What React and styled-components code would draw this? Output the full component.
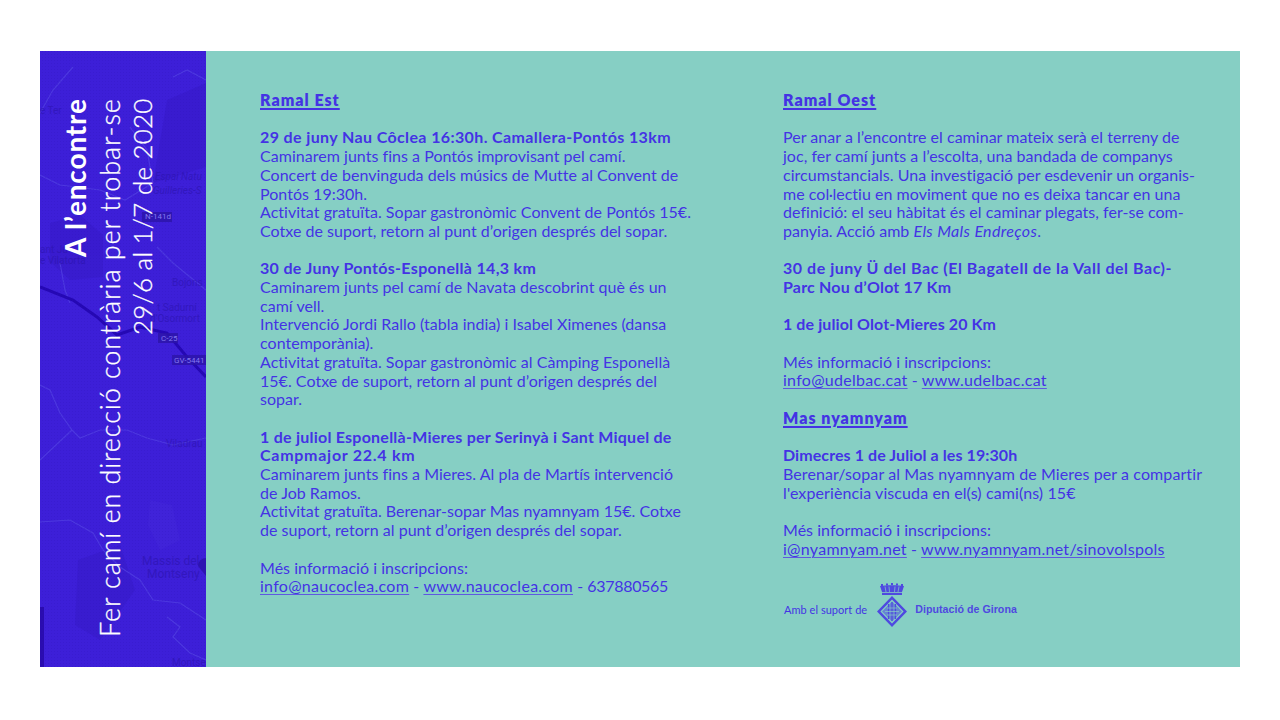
import React from 'react';
import styled, { createGlobalStyle } from 'styled-components';

const Global = createGlobalStyle`
  html, body { margin: 0; padding: 0; background: #fff; }
  body { font-family: "Lato", "Liberation Sans", sans-serif; }
`;

const INK = '#4433e4';

const Page = styled.div`
  width: 1280px;
  height: 720px;
  box-sizing: border-box;
  padding: 51px 40px 53px;
`;

const Panel = styled.main`
  display: flex;
  height: 616px;
  background: #86cfc4;
`;

const Side = styled.aside`
  position: relative;
  flex: 0 0 166px;
  overflow: hidden;
  background: #3d1fd8;
  display: flex;
  justify-content: flex-start;
`;

const MapArt = styled.svg`
  position: absolute;
  inset: 0;
  width: 166px;
  height: 616px;
`;

const Title = styled.h1`
  position: relative;
  margin: 0 0 0 20px;
  padding: 0 0 47px;
  box-sizing: border-box;
  height: 616px;
  writing-mode: vertical-rl;
  transform: rotate(180deg);
  text-align: end;
  color: #fff;
  font-size: 26px;
  line-height: 32px;
  font-weight: 300;
  -webkit-text-stroke: 0.3px #fff;
  white-space: nowrap;
`;

const TitleBold = styled.strong`
  display: block;
  margin-block-end: 4px;
  font-size: 28px;
  line-height: 30px;
  font-weight: 700;
  letter-spacing: 0.85px;
  -webkit-text-stroke: 0;
`;

const TitleLine = styled.span`
  display: block;
  font-size: ${(p) => p.$size}px;
  letter-spacing: ${(p) => p.$spacing}px;
`;

const Content = styled.section`
  flex: 1;
  display: grid;
  grid-template-columns: 523px 1fr;
  padding: 40px 0 0 54px;
  color: ${INK};
  font-size: 16px;
  line-height: 18.7px;
  letter-spacing: 0.03px;
`;

const Column = styled.div`
  display: flex;
  flex-direction: column;
  gap: 18.7px;
`;

const Heading = styled.h2`
  margin: 0;
  font: inherit;
  font-weight: 800;
  letter-spacing: 1px;
  text-decoration: underline;
  text-decoration-thickness: 2px;
  text-underline-offset: 2px;
`;

const Para = styled.p`
  margin: 0;
  white-space: nowrap;
  letter-spacing: ${(p) => p.$track ?? 0.03}px;
`;

const Strong = styled.strong`
  font-weight: 700;
  letter-spacing: ${(p) => p.$track ?? 0.38}px;
`;

const Italic = styled.em`
  letter-spacing: 0.35px;
`;

const Link = styled.a`
  color: inherit;
  letter-spacing: 0.28px;
  text-decoration: underline;
  text-decoration-color: #5f58e0;
  text-decoration-thickness: 1px;
  text-underline-offset: 2px;
`;

const Phone = styled.span`
  letter-spacing: -0.3px;
`;

const Support = styled.div`
  display: flex;
  align-items: center;
  margin-top: 6px;
  font-size: 11px;
  line-height: 14px;
`;

const SupportLabel = styled.span`
  margin: 10px 9px 0 1px;
`;

const Diputacio = styled.span`
  margin: 8px 0 0 7px;
  font-family: "Liberation Sans", sans-serif;
  font-size: 10.65px;
  font-weight: 700;
  color: #4f49e0;
`;

const Lines = ({ items }) =>
  items.map((t, i) => (
    <React.Fragment key={i}>
      {t}
      {i < items.length - 1 && <br />}
    </React.Fragment>
  ));

function SideMap() {
  const label = { fontFamily: 'Roboto, sans-serif', fontSize: 10, fill: '#2a12a8', opacity: 0.55 };
  return (
    <MapArt viewBox="40 51 166 616" aria-hidden="true">
      <defs>
        <pattern id="dots" width="3" height="3" patternUnits="userSpaceOnUse">
          <rect width="1" height="1" fill="#2d12b8" opacity="0.25" />
        </pattern>
      </defs>
      <g fill="#3518c6" opacity="0.45">
        <path d="M50 223 L80 215 L103 235 L103 277 L70 280 L50 262 Z" />
        <path d="M167 100 L206 83 L206 167 L153 183 Z" />
        <path d="M78 560 L120 545 L135 590 L100 640 L75 625 Z" />
      </g>
      <path d="M150 500 L172 505 L180 540 L160 550 L148 525 Z" fill="#4a30dd" opacity="0.25" />
      <g fill="none" stroke="#5240e2" strokeWidth="1.2" opacity="0.75">
        <path d="M73 67 L53 90 L40 113" />
        <path d="M130 127 L147 150 L153 183" />
        <path d="M173 77 L187 70 L206 80" />
        <path d="M40 175 L60 185 L100 190 L125 200 L153 183" />
        <path d="M60 263 L65 290 L70 303" />
        <path d="M157 247 L173 263 L206 290" />
        <path d="M40 385 L50 390 L60 413 L72 430 L80 438 L100 430 L127 430 L147 438 L173 445 L206 438" />
        <path d="M72 430 L40 460" />
        <path d="M40 522 L70 520 L93 533 L103 550 L120 567 L140 580 L153 600 L180 603 L206 620" />
        <path d="M167 617 L180 627 L173 637 L190 653 L206 660" />
      </g>
      <path
        d="M40 287 L73 300 L97 317 L117 335 L140 327 L167 333 L187 357 L206 377"
        fill="none"
        stroke="#2508b4"
        strokeWidth="3"
      />
      <rect x="40" y="607" width="4" height="60" fill="#2a0cb0" />
      <path d="M206 558 a8 8 0 0 0 -8 8 l8 10 Z" fill="#2a12a8" opacity="0.8" />
      <g fill="#2c14a8">
        <rect x="142" y="212" width="30" height="10" opacity="0.8" />
        <rect x="158" y="333" width="20" height="10" opacity="0.8" />
        <rect x="172" y="355" width="34" height="10" opacity="0.8" />
      </g>
      <g style={{ ...label, fontSize: 8, fill: '#8478f0', opacity: 1 }}>
        <text x="145" y="219">N-141d</text>
        <text x="161" y="341">C-25</text>
        <text x="174" y="363">GV-5441</text>
      </g>
      <g style={label}>
        <text x="40" y="114">e Ter</text>
        <text x="155" y="180" fontStyle="italic">Espai Natu</text>
        <text x="153" y="194" fontStyle="italic">Guilleries-S</text>
        <text x="40" y="253">ant Ju</text>
        <text x="40" y="264">e Vilatorta</text>
        <text x="172" y="286">Bojons</text>
        <text x="157" y="311">t Sadurní</text>
        <text x="150" y="322">d'Osormort</text>
        <text x="166" y="447">Viladrau</text>
        <text x="142" y="565" style={{ fontSize: 12, opacity: 1 }}>Massis del</text>
        <text x="147" y="578" style={{ fontSize: 12, opacity: 1 }}>Montseny</text>
        <text x="172" y="666">Montse</text>
      </g>
      <rect x="40" y="51" width="166" height="616" fill="url(#dots)" />
    </MapArt>
  );
}

function Crest() {
  const c = '#4f49e0';
  return (
    <svg width="32" height="44" viewBox="0 0 32 44" aria-hidden="true">
      <g fill={c}>
        <path d="M5 1 h2 v2 H5z M10 0.4 h2 v2 h-2z M15 0 h2 v2 h-2z M20 0.4 h2 v2 h-2z M25 1 h2 v2 h-2z" />
        <path d="M4 3 C9 2 23 2 28 3 L26 9 H6 Z" />
        <rect x="6" y="9.8" width="20" height="2.2" />
      </g>
      <g stroke="#86cfc4" strokeWidth="0.7">
        <path d="M9 3.5 L10 9 M13 3.5 L13.5 9 M19 3.5 L18.5 9 M23 3.5 L22 9" />
      </g>
      <path d="M16 13 L31 28.5 L16 44 L1 28.5 Z M16 16.5 L4.4 28.5 L16 40.5 L27.6 28.5 Z" fill={c} fillRule="evenodd" />
      <path d="M16 18.5 L26 28.5 L16 38.5 L6 28.5 Z" fill={c} opacity="0.55" />
      <g stroke={c} strokeWidth="1.2">
        <path d="M12.5 21 V36 M19.5 21 V36 M16 19 V38" />
      </g>
      <g stroke="#86cfc4" strokeWidth="0.7">
        <path d="M11 25 H21 M9 28.5 H23 M11 32 H21" />
      </g>
    </svg>
  );
}

export default function App() {
  return (
    <Page>
      <Global />
      <Panel>
        <Side>
          <SideMap />
          <Title>
            <TitleBold>A l’encontre</TitleBold>
            <TitleLine $size={27} $spacing={0.9}>Fer camí en direcció contrària per trobar-se</TitleLine>
            <TitleLine $size={26} $spacing={0.2}>29/6 al 1/7 de 2020</TitleLine>
          </Title>
        </Side>
        <Content>
          <Column>
            <Heading>Ramal Est</Heading>
            <Para>
              <Strong>29 de juny Nau Côclea 16:30h. Camallera-Pontós 13km</Strong>
              <br />
              <Lines
                items={[
                  'Caminarem junts fins a Pontós improvisant pel camí.',
                  'Concert de benvinguda dels músics de Mutte al Convent de',
                  'Pontós 19:30h.',
                  'Activitat gratuïta. Sopar gastronòmic Convent de Pontós 15€.',
                  'Cotxe de suport, retorn al punt d’origen després del sopar.',
                ]}
              />
            </Para>
            <Para>
              <Strong $track={0.32}>30 de Juny Pontós-Esponellà 14,3 km</Strong>
              <br />
              <Lines
                items={[
                  'Caminarem junts pel camí de Navata descobrint què és un',
                  'camí vell.',
                  'Intervenció Jordi Rallo (tabla india) i Isabel Ximenes (dansa',
                  'contemporània).',
                  'Activitat gratuïta. Sopar gastronòmic al Càmping Esponellà',
                  '15€. Cotxe de suport, retorn al punt d’origen després del',
                  'sopar.',
                ]}
              />
            </Para>
            <Para>
              <Strong $track={0.24}>1 de juliol Esponellà-Mieres per Serinyà i Sant Miquel de</Strong>
              <br />
              <Strong $track={0.73}>Campmajor 22.4 km</Strong>
              <br />
              <Lines
                items={[
                  'Caminarem junts fins a Mieres. Al pla de Martís intervenció',
                  'de Job Ramos.',
                  'Activitat gratuïta. Berenar-sopar Mas nyamnyam 15€. Cotxe',
                  'de suport, retorn al punt d’origen després del sopar.',
                ]}
              />
            </Para>
            <Para>
              Més informació i inscripcions:
              <br />
              <Link>info@naucoclea.com</Link> - <Link>www.naucoclea.com</Link> - <Phone>637880565</Phone>
            </Para>
          </Column>
          <Column>
            <Heading>Ramal Oest</Heading>
            <Para>
              <Lines
                items={[
                  'Per anar a l’encontre el caminar mateix serà el terreny de',
                  'joc, fer camí junts a l’escolta, una bandada de companys',
                  'circumstancials. Una investigació per esdevenir un organis-',
                  'me col·lectiu en moviment que no es deixa tancar en una',
                  'definició: el seu hàbitat és el caminar plegats, fer-se com-',
                ]}
              />
              <br />
              panyia. Acció amb <Italic>Els Mals Endreços</Italic>.
            </Para>
            <Para>
              <Strong $track={0.53}>30 de juny Ü del Bac (El Bagatell de la Vall del Bac)-</Strong>
              <br />
              <Strong $track={0.19}>Parc Nou d’Olot 17 Km</Strong>
            </Para>
            <Para>
              <Strong $track={0.1}>1 de juliol Olot-Mieres 20 Km</Strong>
            </Para>
            <Para>
              Més informació i inscripcions:
              <br />
              <Link>info@udelbac.cat</Link> - <Link>www.udelbac.cat</Link>
            </Para>
            <Heading>Mas nyamnyam</Heading>
            <Para $track={0.1}>
              <Strong $track={0.08}>Dimecres 1 de Juliol a les 19:30h</Strong>
              <br />
              Berenar/sopar al Mas nyamnyam de Mieres per a compartir
              <br />
              l'experiència viscuda en el(s) cami(ns) 15€
            </Para>
            <Para>
              Més informació i inscripcions:
              <br />
              <Link>i@nyamnyam.net</Link> - <Link>www.nyamnyam.net/sinovolspols</Link>
            </Para>
            <Support>
              <SupportLabel>Amb el suport de</SupportLabel>
              <Crest />
              <Diputacio>Diputació de Girona</Diputacio>
            </Support>
          </Column>
        </Content>
      </Panel>
    </Page>
  );
}
